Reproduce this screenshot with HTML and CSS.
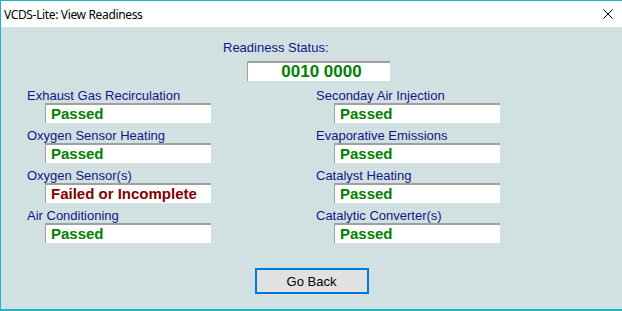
FILE: index.html
```html
<!DOCTYPE html>
<html>
<head>
<meta charset="utf-8">
<link rel="stylesheet" href="styles.css">
</head>
<body>
<div class="window">
  <div class="titlebar">
    <span class="title">VCDS-Lite: View Readiness</span>
    <svg class="close" width="10" height="10" viewBox="0 0 10 10"><path d="M0.5 0.5 L9.5 9.5 M9.5 0.5 L0.5 9.5" stroke="#000" stroke-width="1" fill="none"/></svg>
  </div>
  <div class="content">
    <div class="status">
      <div class="label">Readiness Status:</div>
      <div class="field status-field"><span class="value ok">0010 0000</span></div>
    </div>
    <div class="grid">
      <div class="item"><div class="label">Exhaust Gas Recirculation</div><div class="field"><span class="value ok">Passed</span></div></div>
      <div class="item"><div class="label">Seconday Air Injection</div><div class="field"><span class="value ok">Passed</span></div></div>
      <div class="item"><div class="label">Oxygen Sensor Heating</div><div class="field"><span class="value ok">Passed</span></div></div>
      <div class="item"><div class="label">Evaporative Emissions</div><div class="field"><span class="value ok">Passed</span></div></div>
      <div class="item"><div class="label">Oxygen Sensor(s)</div><div class="field"><span class="value bad">Failed or Incomplete</span></div></div>
      <div class="item"><div class="label">Catalyst Heating</div><div class="field"><span class="value ok">Passed</span></div></div>
      <div class="item"><div class="label">Air Conditioning</div><div class="field"><span class="value ok">Passed</span></div></div>
      <div class="item"><div class="label">Catalytic Converter(s)</div><div class="field"><span class="value ok">Passed</span></div></div>
    </div>
    <div class="actions">
      <button class="btn">Go Back</button>
    </div>
  </div>
</div>
</body>
</html>
```
FILE: styles.css
```css
* { box-sizing: border-box; }
html, body { margin: 0; padding: 0; }
body { width: 622px; height: 311px; overflow: hidden; background: #d1e0e0; }
.window {
  width: 622px;
  height: 311px;
  border-left: 1px solid #22b2c4;
  border-top: 1px solid #22b2c4;
  border-bottom: 2px solid #22b2c4;
  display: flex;
  flex-direction: column;
  background: #d1e0e0;
}
.titlebar {
  height: 26px;
  flex: none;
  background: #fff;
  display: flex;
  align-items: center;
  justify-content: space-between;
  padding: 0 9px 0 3px;
}
.title {
  font-family: "Noto Sans", "DejaVu Sans", sans-serif;
  font-size: 12px;
  letter-spacing: -0.35px;
  color: #000;
}
.close { display: block; }
.content {
  flex: 1;
  padding-top: 13px;
  font-family: "Liberation Sans", Arial, sans-serif;
}
.label {
  font-size: 13px;
  line-height: 15px;
  color: #14148a;
  white-space: nowrap;
}
.status { padding-left: 222px; margin-bottom: 7px; }
.field {
  height: 20px;
  width: 166px;
  background: #fff;
  border-top: 2px solid #a0a0a0;
  border-left: 1px solid #a0a0a0;
  display: flex;
  align-items: center;
  padding-left: 5px;
  padding-bottom: 1px;
}
.status .label { margin-bottom: 6px; }
.status-field {
  width: 143px;
  margin-left: 24px;
  justify-content: center;
  padding-left: 5px;
}
.status-field .value { font-size: 17px; }
.value {
  font-weight: bold;
  font-size: 15px;
  line-height: 17px;
  white-space: nowrap;
}
.ok { color: #008000; }
.bad { color: #800000; }
.grid {
  display: grid;
  grid-template-columns: 289px 289px;
  row-gap: 5px;
  padding-left: 26px;
}
.item .field { margin-left: 18px; }
.actions {
  display: flex;
  justify-content: center;
  margin-top: 25px;
}
.btn {
  width: 114px;
  height: 26px;
  background: #e1e1e1;
  border: 2px solid #0078d7;
  font-family: "Liberation Sans", Arial, sans-serif;
  font-size: 13px;
  color: #000;
  padding: 0;
  margin: 0;
}
```
